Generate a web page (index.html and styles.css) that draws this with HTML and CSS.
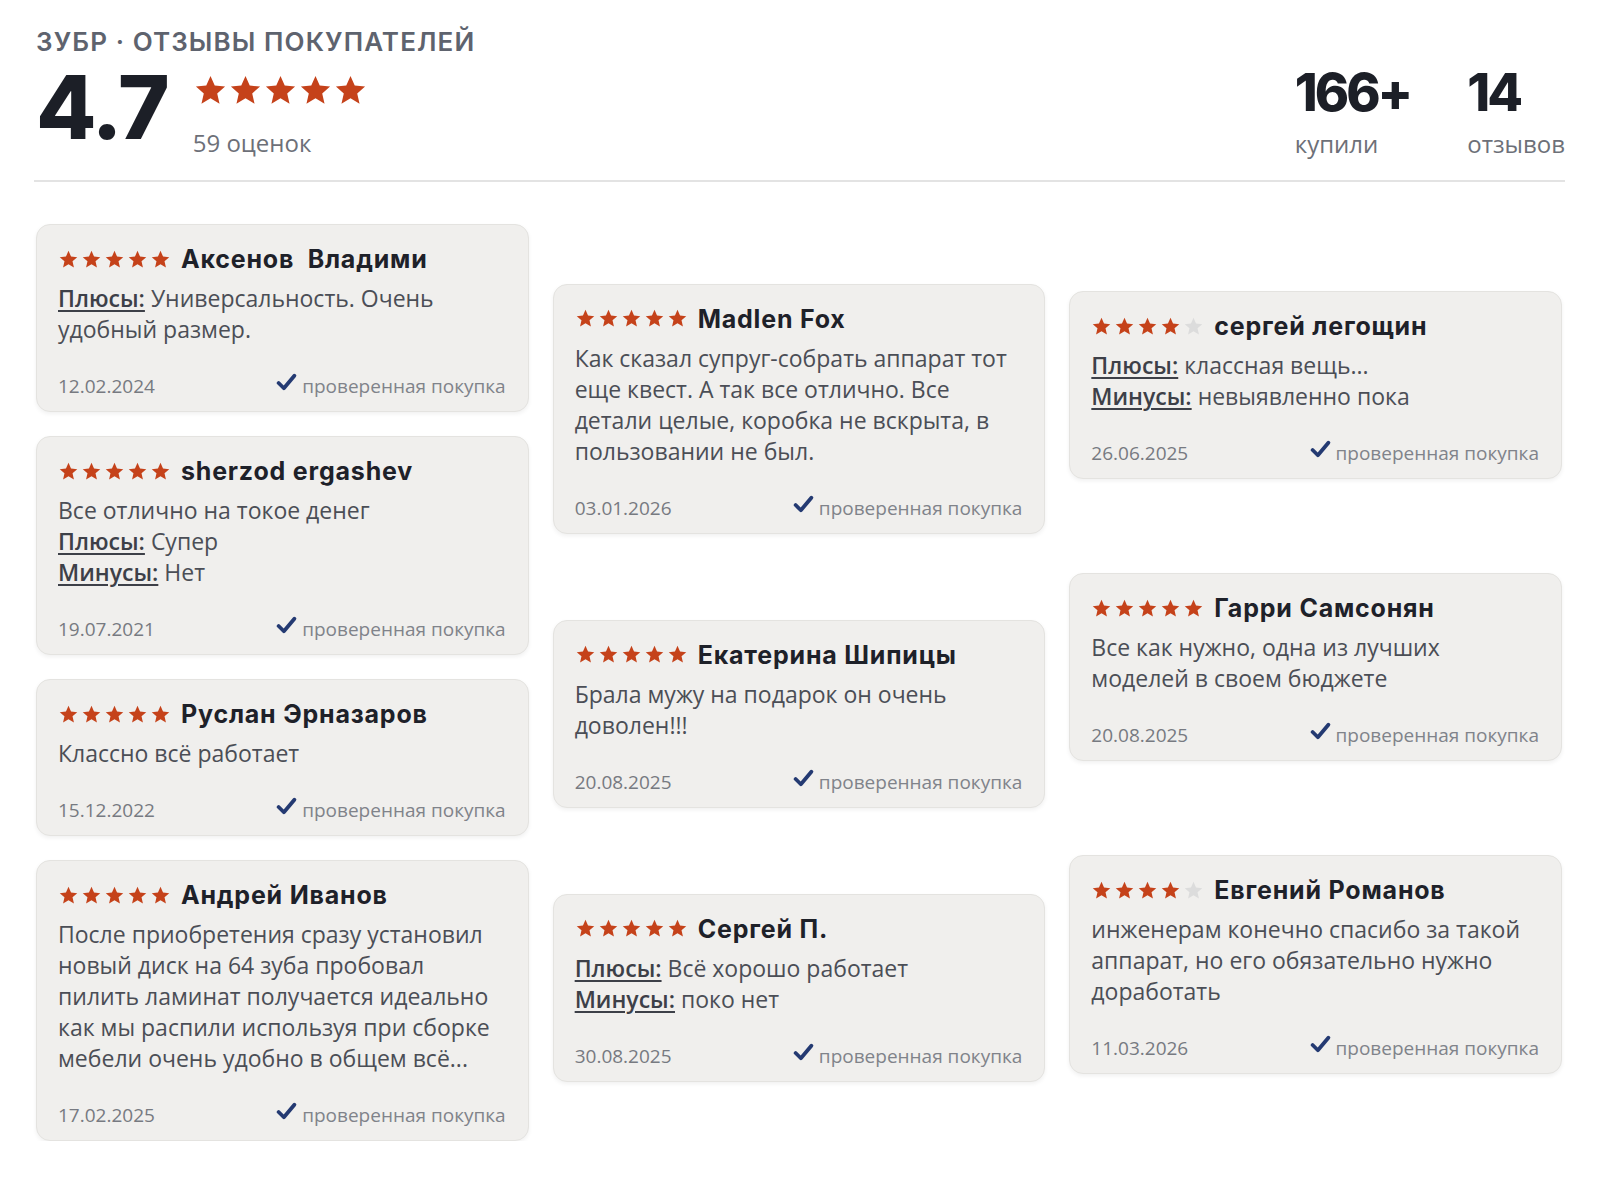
FILE: index.html
```html
<!DOCTYPE html>
<html lang="ru">
<head>
  <meta charset="UTF-8">
  <title>ЗУБР · Отзывы покупателей</title>
  <link rel="stylesheet" href="styles.css">
</head>
<body>

  <!-- star and tick shapes, reused everywhere -->
  <svg class="sprites" xmlns="http://www.w3.org/2000/svg">
    <symbol id="star" viewBox="0 0 24 24">
      <polygon points="12,2 14.9,8.6 22,9.3 16.6,14 18.2,21 12,17.3 5.8,21 7.4,14 2,9.3 9.1,8.6"/>
    </symbol>
    <symbol id="tick" viewBox="0 0 20 18">
      <path d="M2.5 9.5 L7.5 14.5 L17.5 2.5" fill="none" stroke-width="3.6" stroke-linecap="round" stroke-linejoin="round"/>
    </symbol>
  </svg>

  <header class="summary">
    <div class="brand">ЗУБР · ОТЗЫВЫ ПОКУПАТЕЛЕЙ</div>
    <div class="summary-row">
      <div class="score">4.7</div>
      <div class="score-meta">
        <div class="stars stars-lg">
          <svg><use href="#star"/></svg><svg><use href="#star"/></svg><svg><use href="#star"/></svg><svg><use href="#star"/></svg><svg><use href="#star"/></svg>
        </div>
        <div class="score-count">59 оценок</div>
      </div>
      <div class="stats">
        <div class="stat"><div class="stat-num">166+</div><div class="stat-label">купили</div></div>
        <div class="stat"><div class="stat-num">14</div><div class="stat-label">отзывов</div></div>
      </div>
    </div>
  </header>

  <main class="reviews">

    <div class="col">
      <div class="card">
        <div class="card-head">
          <div class="stars"><svg><use href="#star"/></svg><svg><use href="#star"/></svg><svg><use href="#star"/></svg><svg><use href="#star"/></svg><svg><use href="#star"/></svg></div>
          <div class="author">Аксенов&nbsp; Владими</div>
        </div>
        <div class="card-text"><span class="tag">Плюсы:</span> Универсальность. Очень удобный размер.</div>
        <div class="card-foot"><span class="date">12.02.2024</span><span class="verified"><svg><use href="#tick"/></svg>проверенная покупка</span></div>
      </div>

      <div class="card">
        <div class="card-head">
          <div class="stars"><svg><use href="#star"/></svg><svg><use href="#star"/></svg><svg><use href="#star"/></svg><svg><use href="#star"/></svg><svg><use href="#star"/></svg></div>
          <div class="author">sherzod ergashev</div>
        </div>
        <div class="card-text">Все отлично на токое денег<br><span class="tag">Плюсы:</span> Супер<br><span class="tag">Минусы:</span> Нет</div>
        <div class="card-foot"><span class="date">19.07.2021</span><span class="verified"><svg><use href="#tick"/></svg>проверенная покупка</span></div>
      </div>

      <div class="card">
        <div class="card-head">
          <div class="stars"><svg><use href="#star"/></svg><svg><use href="#star"/></svg><svg><use href="#star"/></svg><svg><use href="#star"/></svg><svg><use href="#star"/></svg></div>
          <div class="author">Руслан Эрназаров</div>
        </div>
        <div class="card-text">Классно всё работает</div>
        <div class="card-foot"><span class="date">15.12.2022</span><span class="verified"><svg><use href="#tick"/></svg>проверенная покупка</span></div>
      </div>

      <div class="card">
        <div class="card-head">
          <div class="stars"><svg><use href="#star"/></svg><svg><use href="#star"/></svg><svg><use href="#star"/></svg><svg><use href="#star"/></svg><svg><use href="#star"/></svg></div>
          <div class="author">Андрей Иванов</div>
        </div>
        <div class="card-text">После приобретения сразу установил новый диск на 64 зуба пробовал пилить ламинат получается идеально как мы распили используя при сборке мебели очень удобно в общем всё...</div>
        <div class="card-foot"><span class="date">17.02.2025</span><span class="verified"><svg><use href="#tick"/></svg>проверенная покупка</span></div>
      </div>
    </div>

    <div class="col col-mid">
      <div class="card">
        <div class="card-head">
          <div class="stars"><svg><use href="#star"/></svg><svg><use href="#star"/></svg><svg><use href="#star"/></svg><svg><use href="#star"/></svg><svg><use href="#star"/></svg></div>
          <div class="author">Madlen Fox</div>
        </div>
        <div class="card-text">Как сказал супруг-собрать аппарат тот еще квест. А так все отлично. Все детали целые, коробка не вскрыта, в пользовании не был.</div>
        <div class="card-foot"><span class="date">03.01.2026</span><span class="verified"><svg><use href="#tick"/></svg>проверенная покупка</span></div>
      </div>

      <div class="card">
        <div class="card-head">
          <div class="stars"><svg><use href="#star"/></svg><svg><use href="#star"/></svg><svg><use href="#star"/></svg><svg><use href="#star"/></svg><svg><use href="#star"/></svg></div>
          <div class="author">Екатерина Шипицы</div>
        </div>
        <div class="card-text">Брала мужу на подарок он очень доволен!!!</div>
        <div class="card-foot"><span class="date">20.08.2025</span><span class="verified"><svg><use href="#tick"/></svg>проверенная покупка</span></div>
      </div>

      <div class="card">
        <div class="card-head">
          <div class="stars"><svg><use href="#star"/></svg><svg><use href="#star"/></svg><svg><use href="#star"/></svg><svg><use href="#star"/></svg><svg><use href="#star"/></svg></div>
          <div class="author">Сергей П.</div>
        </div>
        <div class="card-text"><span class="tag">Плюсы:</span> Всё хорошо работает<br><span class="tag">Минусы:</span> поко нет</div>
        <div class="card-foot"><span class="date">30.08.2025</span><span class="verified"><svg><use href="#tick"/></svg>проверенная покупка</span></div>
      </div>
    </div>

    <div class="col col-right">
      <div class="card">
        <div class="card-head">
          <div class="stars"><svg><use href="#star"/></svg><svg><use href="#star"/></svg><svg><use href="#star"/></svg><svg><use href="#star"/></svg><svg class="off"><use href="#star"/></svg></div>
          <div class="author">сергей легощин</div>
        </div>
        <div class="card-text"><span class="tag">Плюсы:</span> классная вещь...<br><span class="tag">Минусы:</span> невыявленно пока</div>
        <div class="card-foot"><span class="date">26.06.2025</span><span class="verified"><svg><use href="#tick"/></svg>проверенная покупка</span></div>
      </div>

      <div class="card">
        <div class="card-head">
          <div class="stars"><svg><use href="#star"/></svg><svg><use href="#star"/></svg><svg><use href="#star"/></svg><svg><use href="#star"/></svg><svg><use href="#star"/></svg></div>
          <div class="author">Гарри Самсонян</div>
        </div>
        <div class="card-text">Все как нужно, одна из лучших моделей в своем бюджете</div>
        <div class="card-foot"><span class="date">20.08.2025</span><span class="verified"><svg><use href="#tick"/></svg>проверенная покупка</span></div>
      </div>

      <div class="card">
        <div class="card-head">
          <div class="stars"><svg><use href="#star"/></svg><svg><use href="#star"/></svg><svg><use href="#star"/></svg><svg><use href="#star"/></svg><svg class="off"><use href="#star"/></svg></div>
          <div class="author">Евгений Романов</div>
        </div>
        <div class="card-text">инженерам конечно спасибо за такой аппарат, но его обязательно нужно доработать</div>
        <div class="card-foot"><span class="date">11.03.2026</span><span class="verified"><svg><use href="#tick"/></svg>проверенная покупка</span></div>
      </div>
    </div>

  </main>

</body>
</html>
```

FILE: styles.css
```css
body {
  margin: 0;
  background: #fff;
  font-family: 'Open Sans', 'Noto Sans', sans-serif;
  color: #4b4e56;
}

.sprites {
  display: none;
}

/* top summary */
.summary {
  margin: 0 35px 0 34px;
  padding-top: 26px;
  border-bottom: 2px solid #e3e3e3;
  padding-bottom: 20px;
}

.brand {
  font-family: 'Inter', 'DejaVu Sans', sans-serif;
  font-size: 26px;
  line-height: 32px;
  font-weight: 600;
  color: #5e636e;
  letter-spacing: 1.1px;
  padding-left: 2px;
}

.summary-row {
  display: flex;
  align-items: flex-start;
  margin-top: 5px;
}

.score {
  font-family: 'Inter', 'DejaVu Sans', sans-serif;
  font-size: 88px;
  line-height: 88px;
  font-weight: 800;
  color: #1c1f27;
  letter-spacing: -2px;
  padding-left: 2px;
}

.score-meta {
  margin-left: 25px;
  padding-top: 10px;
}

.stars {
  display: flex;
  gap: 2px;
  fill: #c5421a;
}

.stars svg {
  width: 21px;
  height: 21px;
}

.stars svg.off {
  fill: #dcdcdc;
}

.stars-lg {
  gap: 0;
}

.stars-lg svg {
  width: 35px;
  height: 35px;
}

.score-count {
  font-size: 24px;
  line-height: 32px;
  margin-top: 19px;
  color: #6d7078;
}

.stats {
  margin-left: auto;
  display: flex;
  gap: 57px;
  padding-top: 4px;
}

.stat-num {
  font-family: 'Inter', 'DejaVu Sans', sans-serif;
  font-size: 52px;
  line-height: 52px;
  font-weight: 800;
  color: #1c1f27;
  letter-spacing: -3px;
}

.stat-label {
  font-size: 24px;
  line-height: 32px;
  margin-top: 9px;
  color: #6d7078;
}

/* review columns */
.reviews {
  display: grid;
  grid-template-columns: repeat(3, 1fr);
  column-gap: 24px;
  align-items: center;
  padding: 42px 38px 0 36px;
}

.col {
  display: flex;
  flex-direction: column;
  gap: 24px;
}

.col-mid {
  gap: 86px;
}

.col-right {
  gap: 94px;
}

.card {
  background: #f0efed;
  border: 1px solid #e4e3e0;
  border-radius: 14px;
  box-shadow: 0 2px 4px rgba(0, 0, 0, 0.06);
  padding: 18px 22px 11px 21px;
}

.card-head {
  display: flex;
  align-items: center;
  gap: 10px;
  height: 32px;
}

.author {
  font-family: 'Inter', 'DejaVu Sans', sans-serif;
  font-size: 25px;
  font-weight: 700;
  letter-spacing: 0.8px;
  color: #1e2129;
  white-space: nowrap;
}

.card-text {
  margin-top: 8px;
  font-size: 23px;
  line-height: 31px;
  color: #4b4e56;
}

.tag {
  font-weight: 600;
  color: #3d4048;
  text-decoration: underline;
  text-underline-offset: 3px;
  text-decoration-thickness: 2px;
}

.card-foot {
  display: flex;
  justify-content: space-between;
  align-items: baseline;
  margin-top: 27px;
  font-size: 19px;
  line-height: 28px;
}

.date {
  color: #777a81;
}

.verified {
  color: #80838a;
}

.verified svg {
  width: 21px;
  height: 19px;
  margin-right: 5px;
  stroke: #243a72;
  vertical-align: 1px;
}
```
